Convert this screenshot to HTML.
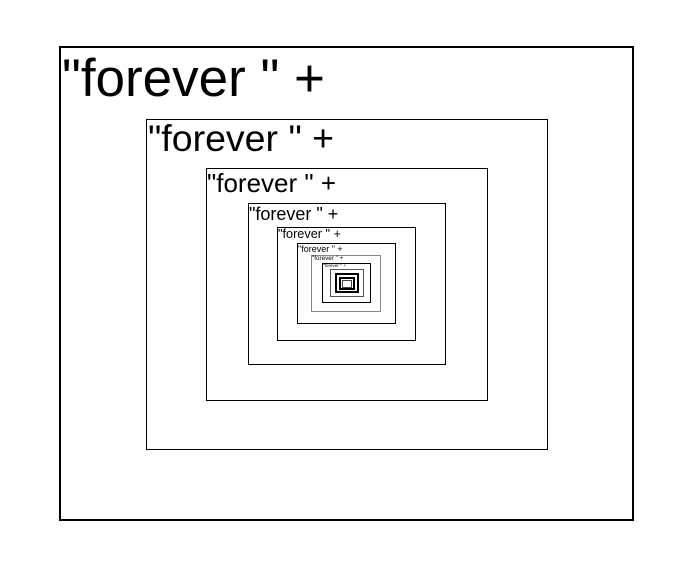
<!DOCTYPE html>
<html><head><style>
body{margin:0;width:686px;height:565px;background:#fff;position:relative;overflow:hidden;font-family:"Liberation Sans",sans-serif}
.b{position:absolute;border:1px solid #000;box-sizing:border-box}
.t{position:absolute;white-space:nowrap;line-height:1;color:#000}
</style></head><body>
<div class="b" style="left:59px;top:46px;width:575px;height:475px;border-width:2px"></div>
<div class="t" style="left:62px;top:52px;font-size:53px">"forever " +</div>
<div class="b" style="left:146px;top:119px;width:402px;height:331px"></div>
<div class="t" style="left:148px;top:120px;font-size:37.5px">"forever " +</div>
<div class="b" style="left:206px;top:168px;width:282px;height:233px"></div>
<div class="t" style="left:207px;top:170px;font-size:26px">"forever " +</div>
<div class="b" style="left:248px;top:203px;width:198px;height:162px"></div>
<div class="t" style="left:249px;top:205px;font-size:18px">"forever " +</div>
<div class="b" style="left:277px;top:227px;width:139px;height:114px"></div>
<div class="t" style="left:278px;top:228px;font-size:12.7px">"forever " +</div>
<div class="b" style="left:297px;top:243px;width:99px;height:81px"></div>
<div class="t" style="left:298px;top:244.5px;font-size:9px">"forever " +</div>
<div class="b" style="left:311px;top:255px;width:70px;height:57px;border-color:#888"></div>
<div class="t" style="left:312px;top:255.7px;font-size:6.3px">"forever " +</div>
<div class="b" style="left:322px;top:263px;width:49px;height:40px"></div>
<div class="t" style="left:323px;top:263.5px;font-size:4.6px">"forever " +</div>
<div class="b" style="left:330px;top:269px;width:34px;height:28px;border-color:#555"></div>
<div class="b" style="left:335px;top:273px;width:24px;height:20px;border-width:2px"></div>
<div class="b" style="left:339px;top:277px;width:16px;height:13px;border-width:2px"></div>
<div class="b" style="left:342px;top:280px;width:10px;height:8px;border-color:#444"></div>
</body></html>
